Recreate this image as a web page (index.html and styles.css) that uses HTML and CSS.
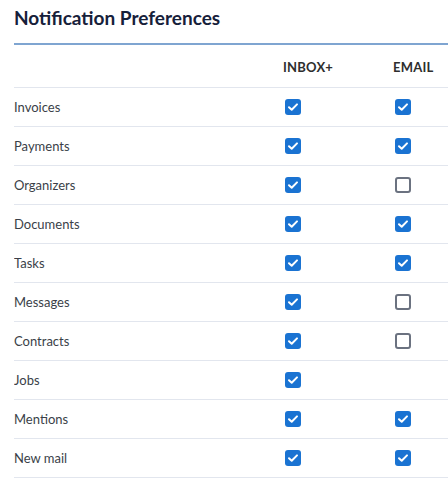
FILE: index.html
```html
<!DOCTYPE html>
<html>
<head>
<meta charset="utf-8">
<link rel="stylesheet" href="styles.css">
</head>
<body>
<div class="panel">
  <h1 class="title">Notification Preferences</h1>
  <div class="prefs">
    <div class="row head"><div class="label"></div><div class="cell">INBOX+</div><div class="cell">EMAIL</div></div>
    <div class="row"><div class="label">Invoices</div><div class="cell"><span class="cb on"></span></div><div class="cell"><span class="cb on"></span></div></div>
    <div class="row"><div class="label">Payments</div><div class="cell"><span class="cb on"></span></div><div class="cell"><span class="cb on"></span></div></div>
    <div class="row"><div class="label">Organizers</div><div class="cell"><span class="cb on"></span></div><div class="cell"><span class="cb"></span></div></div>
    <div class="row"><div class="label">Documents</div><div class="cell"><span class="cb on"></span></div><div class="cell"><span class="cb on"></span></div></div>
    <div class="row"><div class="label">Tasks</div><div class="cell"><span class="cb on"></span></div><div class="cell"><span class="cb on"></span></div></div>
    <div class="row"><div class="label">Messages</div><div class="cell"><span class="cb on"></span></div><div class="cell"><span class="cb"></span></div></div>
    <div class="row"><div class="label">Contracts</div><div class="cell"><span class="cb on"></span></div><div class="cell"><span class="cb"></span></div></div>
    <div class="row"><div class="label">Jobs</div><div class="cell"><span class="cb on"></span></div><div class="cell"></div></div>
    <div class="row"><div class="label">Mentions</div><div class="cell"><span class="cb on"></span></div><div class="cell"><span class="cb on"></span></div></div>
    <div class="row"><div class="label">New mail</div><div class="cell"><span class="cb on"></span></div><div class="cell"><span class="cb on"></span></div></div>
  </div>
</div>
</body>
</html>
```
FILE: styles.css
```css
html, body {
  margin: 0;
  padding: 0;
  background: #fff;
  overflow: hidden;
}
body {
  font-family: Lato, "Liberation Sans", sans-serif;
  color: #333a44;
}
.panel {
  margin-left: 14px;
  width: 434px;
  overflow: hidden;
}
.title {
  margin: 0;
  padding-top: 5px;
  height: 45px;
  box-sizing: border-box;
  font-size: 19px;
  line-height: 26px;
  font-weight: 700;
  color: #16203a;
  border-bottom: 2px solid #7fa5d1;
  width: 477px;
}
.prefs {
  width: 477px;
}
.row {
  display: grid;
  grid-template-columns: 257px 110px 110px;
  align-items: center;
  height: 39px;
  box-sizing: border-box;
  border-bottom: 1px solid #e2e6ee;
  font-size: 13px;
  color: #3a3f48;
}
.row.head {
  height: 43px;
  padding-top: 2px;
  font-weight: 700;
  letter-spacing: 0.2px;
  color: #2e2e2e;
}
.cell {
  padding-left: 12px;
}
.cb {
  display: block;
  width: 16px;
  height: 16px;
  margin-left: 2px;
  box-sizing: border-box;
  border: 2px solid #6b7280;
  border-radius: 3px;
  background: #fff;
}
.cb.on {
  border: none;
  background: #1a73d2 url("data:image/svg+xml,%3Csvg xmlns='http://www.w3.org/2000/svg' viewBox='0 0 16 16'%3E%3Cpath d='M4 8.3 L6.7 10.8 L12 5.4' fill='none' stroke='white' stroke-width='2' stroke-linecap='round' stroke-linejoin='round'/%3E%3C/svg%3E") center/16px 16px no-repeat;
}
```
